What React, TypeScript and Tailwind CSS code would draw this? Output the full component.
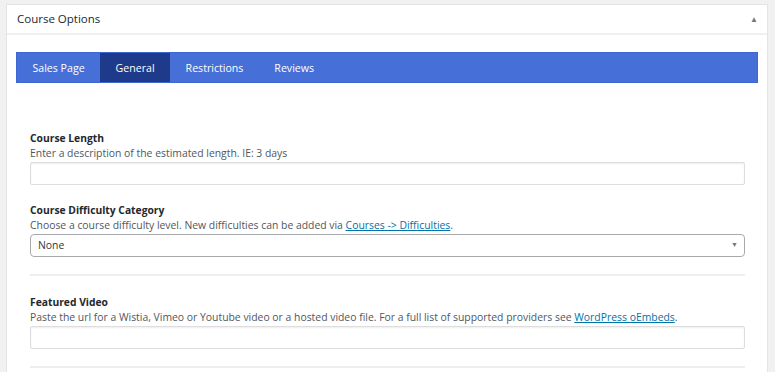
import React from "react";

function Field({ label, desc, children }: { label: string; desc: React.ReactNode; children: React.ReactNode }) {
  return (
    <div className="flex flex-col">
      <div className="text-[10.3px] font-bold leading-[15px] text-[#23282d]">{label}</div>
      <div className="text-[10.4px] leading-[15px] text-[#50575e]">{desc}</div>
      <div className="mt-[1px]">{children}</div>
    </div>
  );
}

function TextInput() {
  return <div className="h-[23px] w-full rounded-[2px] border border-[#dddddd] bg-white shadow-[inset_0_1px_2px_rgba(0,0,0,0.07)]" />;
}

export default function App() {
  const tabs = ["Sales Page", "General", "Restrictions", "Reviews"];
  return (
    <div className="min-h-[372px] bg-[#f1f1f1] pl-[6px] pt-[4px] pr-[7px]" style={{ fontFamily: '"Open Sans", "Noto Sans", sans-serif' }}>
      <div className="border border-[#e2e4e7] bg-white">
        <div className="flex h-[30px] items-center justify-between border-b-2 border-[#f0f0f0] pl-[10px] pr-[9px]">
          <span className="text-[11.5px] text-[#23282d]">Course Options</span>
          <span className="text-[8px] text-[#72777c]">▲</span>
        </div>
        <div className="px-[9px] pt-[17px]">
          <div className="flex h-[31px] border border-[#3e66d4] bg-[#476fd8]">
            {tabs.map((t) => (
              <div
                key={t}
                className={
                  "flex items-center px-[15.5px] pt-[3px] text-[10.6px] text-white " +
                  (t === "General" ? "bg-[#1e3a8a]" : "")
                }
              >
                {t}
              </div>
            ))}
          </div>
          <div className="flex flex-col pl-[14px] pr-[13px] pt-[48px] pb-[6px]">
            <Field label="Course Length" desc="Enter a description of the estimated length. IE: 3 days">
              <TextInput />
            </Field>
            <div className="mt-[18px]">
              <Field
                label="Course Difficulty Category"
                desc={
                  <>
                    Choose a course difficulty level. New difficulties can be added via{" "}
                    <span className="text-[#0073aa] underline">Courses -&gt; Difficulties</span>.
                  </>
                }
              >
                <div className="flex h-[23px] w-full items-center justify-between rounded-[4px] border border-[#a7aaad] bg-white pl-[7px] pr-[6px] text-[10.4px] text-[#32373c]">
                  <span>None</span>
                  <span className="text-[7px] text-[#72777c]">▼</span>
                </div>
              </Field>
            </div>
            <div className="mt-[17px] h-[2px] bg-[#eeeeee]" />
            <div className="mt-[19px]">
              <Field
                label="Featured Video"
                desc={
                  <>
                    Paste the url for a Wistia, Vimeo or Youtube video or a hosted video file. For a full list of supported providers see{" "}
                    <span className="text-[#0073aa] underline">WordPress oEmbeds</span>.
                  </>
                }
              >
                <TextInput />
              </Field>
            </div>
            <div className="mt-[17px] h-[2px] bg-[#eeeeee]" />
          </div>
        </div>
      </div>
    </div>
  );
}
